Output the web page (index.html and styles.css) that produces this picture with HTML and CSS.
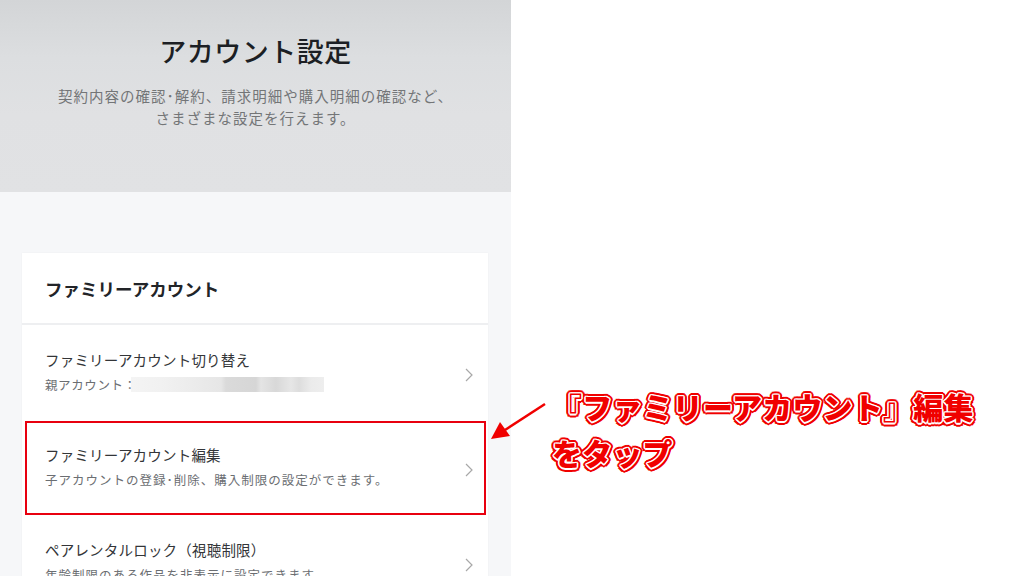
FILE: index.html
```html
<!DOCTYPE html>
<html lang="ja">
<head>
<meta charset="utf-8">
<link rel="stylesheet" href="styles.css">
</head>
<body>
<div class="page">
  <div class="panel">
    <header class="hero">
      <h1 class="hero-title">アカウント設定</h1>
      <p class="hero-sub">契約内容の確認･解約、請求明細や購入明細の確認など、<br>さまざまな設定を行えます。</p>
    </header>
    <main class="content">
      <section class="card">
        <div class="card-head">ファミリーアカウント</div>
        <div class="row">
          <div class="row-text">
            <div class="row-title">ファミリーアカウント切り替え</div>
            <div class="row-sub"><span class="label">親アカウント：</span><span class="mosaic"></span></div>
          </div>
          <svg class="chev" viewBox="0 0 8 14" width="8" height="14"><path d="M1 1 L7 7 L1 13" fill="none" stroke="#a8a8a8" stroke-width="1.2"/></svg>
        </div>
        <div class="row row-hl">
          <div class="row-text">
            <div class="row-title">ファミリーアカウント編集</div>
            <div class="row-sub">子アカウントの登録･削除、購入制限の設定ができます。</div>
          </div>
          <svg class="chev" viewBox="0 0 8 14" width="8" height="14"><path d="M1 1 L7 7 L1 13" fill="none" stroke="#a8a8a8" stroke-width="1.2"/></svg>
        </div>
        <div class="row">
          <div class="row-text">
            <div class="row-title">ペアレンタルロック（視聴制限）</div>
            <div class="row-sub">年齢制限のある作品を非表示に設定できます。</div>
          </div>
          <svg class="chev" viewBox="0 0 8 14" width="8" height="14"><path d="M1 1 L7 7 L1 13" fill="none" stroke="#a8a8a8" stroke-width="1.2"/></svg>
        </div>
      </section>
    </main>
  </div>
  <div class="side">
    <svg class="arrow" viewBox="0 0 70 60" width="70" height="60">
      <line x1="60" y1="12" x2="20" y2="38" stroke="#f00000" stroke-width="2.5"/>
      <polygon points="6,47 15,30 25,44" fill="#f00000"/>
    </svg>
    <div class="callout">『ファミリーアカウント』編集<br>をタップ</div>
  </div>
</div>
</body>
</html>
```

FILE: styles.css
```css
* { box-sizing: border-box; }
html, body { margin: 0; padding: 0; }
body {
  width: 1024px;
  height: 576px;
  overflow: hidden;
  background: #ffffff;
  font-family: "Noto Sans CJK JP", "Noto Sans", sans-serif;
}
.page {
  display: flex;
  width: 1024px;
  height: 576px;
  overflow: hidden;
}
.panel {
  width: 511px;
  flex: none;
  background: #f6f7f9;
  display: flex;
  flex-direction: column;
}
.hero {
  height: 192px;
  flex: none;
  background: linear-gradient(180deg, #d3d5d7 0%, #dcdee0 30%, #e0e1e3 60%, #e1e2e4 100%);
  text-align: center;
  padding-top: 31px;
}
.hero-title {
  margin: 0;
  font-size: 27px;
  font-weight: 500;
  color: #1c1f24;
  line-height: 40px;
  letter-spacing: 0.5px;
}
.hero-sub {
  margin: 14px 0 0;
  font-size: 14.5px;
  line-height: 22px;
  color: #737577;
  letter-spacing: 1px;
}
.content {
  padding: 61px 23px 0 22px;
}
.card {
  background: #ffffff;
  box-shadow: 0 0 2px rgba(0,0,0,0.04);
}
.card-head {
  height: 72px;
  display: flex;
  align-items: center;
  padding-left: 23px;
  font-size: 17.5px;
  font-weight: 700;
  color: #222428;
  border-bottom: 2px solid #eeeff1;
}
.row {
  height: 95px;
  display: flex;
  align-items: center;
  padding: 0 15px 0 23px;
  position: relative;
}
.row-text {
  flex: 1;
  padding-bottom: 2px;
}
.row-title {
  font-size: 14.5px;
  color: #333538;
  line-height: 22px;
  letter-spacing: 0.2px;
}
.row-sub {
  margin-top: 4px;
  font-size: 12.5px;
  color: #6b6e72;
  line-height: 20px;
  display: flex;
  align-items: center;
  letter-spacing: 1px;
}
.label {
  letter-spacing: 0.6px;
}
.mosaic {
  display: inline-block;
  width: 193px;
  height: 15px;
  margin-left: -6px;
  background: linear-gradient(90deg, #f4f4f4 0px, #f1f1f1 30px, #ececec 60px, #e6e6e6 90px, #dadada 95px, #d6d6d6 125px, #e4e4e4 130px, #d8d8d8 145px, #e6e6e6 160px, #dddddd 168px, #ebebeb 180px, #eeeeee 193px);
}
.chev {
  flex: none;
  margin-top: 4px;
}
.row-hl::after {
  content: "";
  position: absolute;
  left: 3px;
  right: 2px;
  top: 1px;
  bottom: 0;
  border: 2.5px solid #e8000f;
}
.side {
  flex: 1;
  position: relative;
}
.arrow {
  position: absolute;
  left: -26px;
  top: 392px;
}
.callout {
  position: absolute;
  left: 41px;
  top: 383px;
  font-size: 30px;
  font-weight: 900;
  line-height: 46px;
  color: #f00000;
  letter-spacing: 0.2px;
  white-space: nowrap;
  text-shadow:
    1.5px 0 0 #fff, -1.5px 0 0 #fff, 0 1.5px 0 #fff, 0 -1.5px 0 #fff,
    1px 1px 0 #fff, -1px 1px 0 #fff, 1px -1px 0 #fff, -1px -1px 0 #fff,
    3.5px 0 0 #f00000, -3.5px 0 0 #f00000, 0 3.5px 0 #f00000, 0 -3.5px 0 #f00000,
    2.5px 2.5px 0 #f00000, -2.5px 2.5px 0 #f00000, 2.5px -2.5px 0 #f00000, -2.5px -2.5px 0 #f00000,
    3.2px 1.4px 0 #f00000, -3.2px 1.4px 0 #f00000, 3.2px -1.4px 0 #f00000, -3.2px -1.4px 0 #f00000,
    1.4px 3.2px 0 #f00000, -1.4px 3.2px 0 #f00000, 1.4px -3.2px 0 #f00000, -1.4px -3.2px 0 #f00000;
}
```
